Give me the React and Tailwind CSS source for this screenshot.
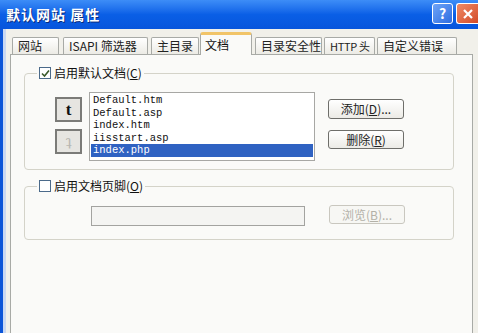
import React from "react";

const TABS = [
  { label: "网站", w: "w-[47px]", ml: "ml-[2px]" },
  { label: "ISAPI 筛选器", w: "w-[85px]", ml: "ml-[4px]" },
  { label: "主目录", w: "w-[48px]", ml: "ml-[3px]" },
  { label: "文档", w: "w-[52px]", ml: "ml-[1px]", active: true },
  { label: "目录安全性", w: "w-[67px]", ml: "ml-[3px]" },
  { label: "HTTP 头", w: "w-[51px]", ml: "ml-[2px]", small: true },
  { label: "自定义错误", w: "w-[80px]", ml: "ml-[2px]" },
];

const FILES = ["Default.htm", "Default.asp", "index.htm", "iisstart.asp", "index.php"];

function CheckBox({ checked }) {
  return (
    <span className="w-[12px] h-[12px] border border-[#4b6a8a] bg-white flex items-center justify-center shrink-0">
      {checked && (
        <svg width="9" height="9" viewBox="0 0 9 9">
          <path d="M1 4.5 L3.5 7 L8 1.5" fill="none" stroke="#3a5a2a" strokeWidth="1.6" />
        </svg>
      )}
    </span>
  );
}

function XpButton({ children, disabled, className = "" }) {
  return (
    <div
      className={`w-[76px] rounded-[3px] border flex items-center justify-center text-[12px] ${
        disabled
          ? "border-[#c9c7bf] text-[#b3b1a8] bg-[#f7f7f4]"
          : "border-[#6e6e6a] text-[#222] bg-gradient-to-b from-white to-[#ecebe6]"
      } ${className}`}
    >
      {children}
    </div>
  );
}

function TabStrip() {
  return (
    <div className="flex items-end h-[25px] shrink-0">
      {TABS.map((t) =>
        t.active ? (
          <div
            key={t.label}
            className={`${t.w} ${t.ml} relative z-10 -mb-px h-[23px] bg-[#fafaf8] border-x border-[#a8aaa6] border-t-[3px] border-t-[#f1c468] rounded-t-[3px] pl-[4px] pt-[3px] leading-[14px] text-[12px] text-[#111]`}
          >
            {t.label}
          </div>
        ) : (
          <div
            key={t.label}
            className={`${t.w} ${t.ml} h-[17px] border-x border-t border-[#a8aaa6] rounded-t-[2px] bg-gradient-to-b from-white to-[#ecebe5] pl-[5px] leading-[16px] ${
              t.small ? "text-[11px] tracking-[-0.3px]" : "text-[12px]"
            } text-[#222] whitespace-nowrap overflow-hidden`}
          >
            {t.label}
          </div>
        )
      )}
    </div>
  );
}

export default function App() {
  return (
    <div
      className="w-[478px] h-[333px] overflow-hidden bg-[#f1f0ea] flex flex-col"
      style={{ fontFamily: '"Noto Sans CJK SC", "Liberation Sans", sans-serif' }}
    >
      {/* title bar */}
      <div className="h-[29px] shrink-0 flex items-center bg-gradient-to-b from-[#3d8df7] via-[#0a5fe6] to-[#0755dc] pl-[6px] pr-0">
        <span className="text-white font-bold text-[14px] tracking-[1px] [text-shadow:1px_1px_0_#0a2a7a]">
          默认网站 属性
        </span>
        <div className="ml-auto flex items-center gap-[3px] self-start mt-[3px]">
          <div className="w-[21px] h-[21px] rounded-[3px] border border-white bg-gradient-to-br from-[#6fa4f7] to-[#2d6ce0] text-white font-bold text-[14px] flex items-center justify-center">
            ?
          </div>
          <div className="w-[22px] h-[21px] rounded-l-[3px] border border-r-0 border-white bg-gradient-to-br from-[#ef8a66] to-[#d24a26] flex items-center justify-center">
            <svg width="12" height="12" viewBox="0 0 12 12">
              <path d="M2 2 L10 10 M10 2 L2 10" stroke="white" strokeWidth="2.2" />
            </svg>
          </div>
        </div>
      </div>

      <div className="flex flex-1 min-h-0">
        <div className="w-[3px] bg-[#0b55d8] shrink-0" />
        <div className="w-[3px] bg-[#c9d8f2] shrink-0" />
        <div className="flex-1 pl-[4px] flex flex-col min-h-0">
          <TabStrip />

          {/* tab page */}
          <div className="w-[463px] h-[300px] shrink-0 border border-[#a8aaa6] bg-[#fafaf8] pt-[11px] pl-[13px] pr-[18px] flex flex-col">
            {/* group 1 */}
            <fieldset className="border border-[#d4d3c9] rounded-[4px] pb-[8px]">
              <legend className="ml-[12px] px-[2px] flex items-center gap-[3px] h-[14px] text-[12px] leading-[14px] text-[#111]">
                <CheckBox checked />
                <span>
                  启用默认文档(<span className="underline">C</span>)
                </span>
              </legend>
              <div className="flex items-start mt-[12px]">
                <div className="ml-[30px] mt-[5px] flex flex-col gap-[7px]">
                  <div className="w-[27px] h-[25px] border-2 border-[#7b7b78] bg-[#e6e5e1] flex items-center justify-center text-[17px] font-bold text-[#111] leading-none" style={{ fontFamily: '"Liberation Serif", serif' }}>
                    t
                  </div>
                  <div className="w-[27px] h-[25px] border-2 border-[#7b7b78] bg-[#e6e5e1] flex items-center justify-center text-[15px] text-[#b8b7b2] leading-none" style={{ fontFamily: '"DejaVu Serif", serif' }}>
                    ʇ
                  </div>
                </div>
                <div
                  className="ml-[7px] w-[226px] h-[69px] border border-[#a7a7a4] bg-white pt-[1px] px-[1px] text-[10.5px] leading-[12.5px] text-[#111]"
                  style={{ fontFamily: '"Liberation Mono", monospace' }}
                >
                  {FILES.map((f, i) => (
                    <div
                      key={f}
                      className={`pl-[2px] ${i === 4 ? "bg-[#2f62c2] text-white" : ""}`}
                    >
                      {f}
                    </div>
                  ))}
                </div>
                <div className="ml-[13px] mt-[7px] flex flex-col gap-[11px]">
                  <XpButton className="h-[20px]">
                    添加(<span className="underline">D</span>)...
                  </XpButton>
                  <XpButton className="h-[19px]">
                    删除(<span className="underline">R</span>)
                  </XpButton>
                </div>
              </div>
            </fieldset>

            {/* group 2 */}
            <fieldset className="mt-[9px] border border-[#d4d3c9] rounded-[4px] pb-[13px]">
              <legend className="ml-[12px] px-[2px] flex items-center gap-[3px] h-[14px] text-[12px] leading-[14px] text-[#111]">
                <CheckBox />
                <span>
                  启用文档页脚(<span className="underline">O</span>)
                </span>
              </legend>
              <div className="flex items-start mt-[12px]">
                <div className="ml-[66px] mt-[1px] w-[214px] h-[20px] border border-[#a3a3a0] bg-[#f4f4f2]" />
                <XpButton disabled className="ml-[24px] h-[19px] w-[75px]">
                  浏览(<span className="underline">B</span>)...
                </XpButton>
              </div>
            </fieldset>
          </div>
        </div>
        <div className="w-[3px] shrink-0" />
      </div>
    </div>
  );
}
